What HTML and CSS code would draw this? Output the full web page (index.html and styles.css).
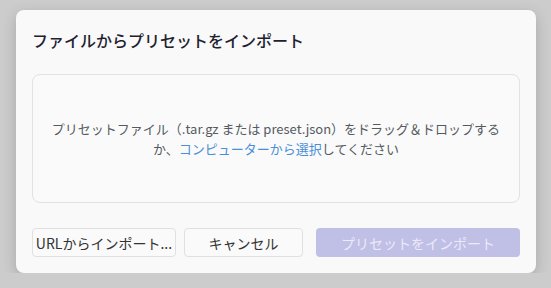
FILE: index.html
```html
<!DOCTYPE html>
<html lang="ja">
<head>
  <meta charset="utf-8">
  <link rel="stylesheet" href="styles.css">
</head>
<body>
  <div class="dialog">
    <h2 class="dialog-title">ファイルからプリセットをインポート</h2>
    <div class="drop-zone">
      <p>プリセットファイル（.tar.gz または preset.json）をドラッグ＆ドロップするか、<a class="pick-link">コンピューターから選択</a>してください</p>
    </div>
    <div class="dialog-actions">
      <button class="btn btn-url">URLからインポート...</button>
      <button class="btn btn-cancel">キャンセル</button>
      <button class="btn btn-primary" disabled>プリセットをインポート</button>
    </div>
  </div>
</body>
</html>
```

FILE: styles.css
```css
body {
  margin: 0;
  background-color: #cccccc;
  font-family: "Noto Sans CJK JP", "Noto Sans", sans-serif;
}
.dialog {
  width: 520px;
  box-sizing: border-box;
  margin: 10px 0 0 16px;
  padding: 20px 16px 16px;
  background-color: #f9f9f9;
  border-radius: 8px;
  box-shadow: 0 4px 14px rgba(0, 0, 0, 0.18);
}
.dialog-title {
  margin: 0;
  font-size: 16px;
  line-height: 20px;
  font-weight: 500;
  color: #1e2230;
}
.drop-zone {
  margin-top: 24px;
  height: 129px;
  box-sizing: border-box;
  border: 1px solid #e2e2e2;
  border-radius: 8px;
  background-color: #fafafa;
  display: flex;
  align-items: center;
  justify-content: center;
  padding: 0 18px;
}
.drop-zone p {
  margin: 0;
  font-size: 13px;
  line-height: 20px;
  color: #555a60;
  text-align: center;
}
.pick-link {
  color: #4a8fd8;
  cursor: pointer;
}
.dialog-actions {
  margin-top: 25px;
  display: flex;
  gap: 8px;
}
.btn {
  height: 29px;
  box-sizing: border-box;
  border: 1px solid #e0e0e0;
  border-radius: 4px;
  background-color: #fafafa;
  font-family: inherit;
  font-size: 14px;
  color: #333;
  padding: 0;
  white-space: nowrap;
  overflow: hidden;
}
.btn-url {
  width: 144px;
}
.btn-cancel {
  width: 119px;
}
.btn-primary {
  margin-left: 5px;
  flex: 1;
  border: none;
  background-color: #c0bfe6;
  color: #eceaf8;
}
```
